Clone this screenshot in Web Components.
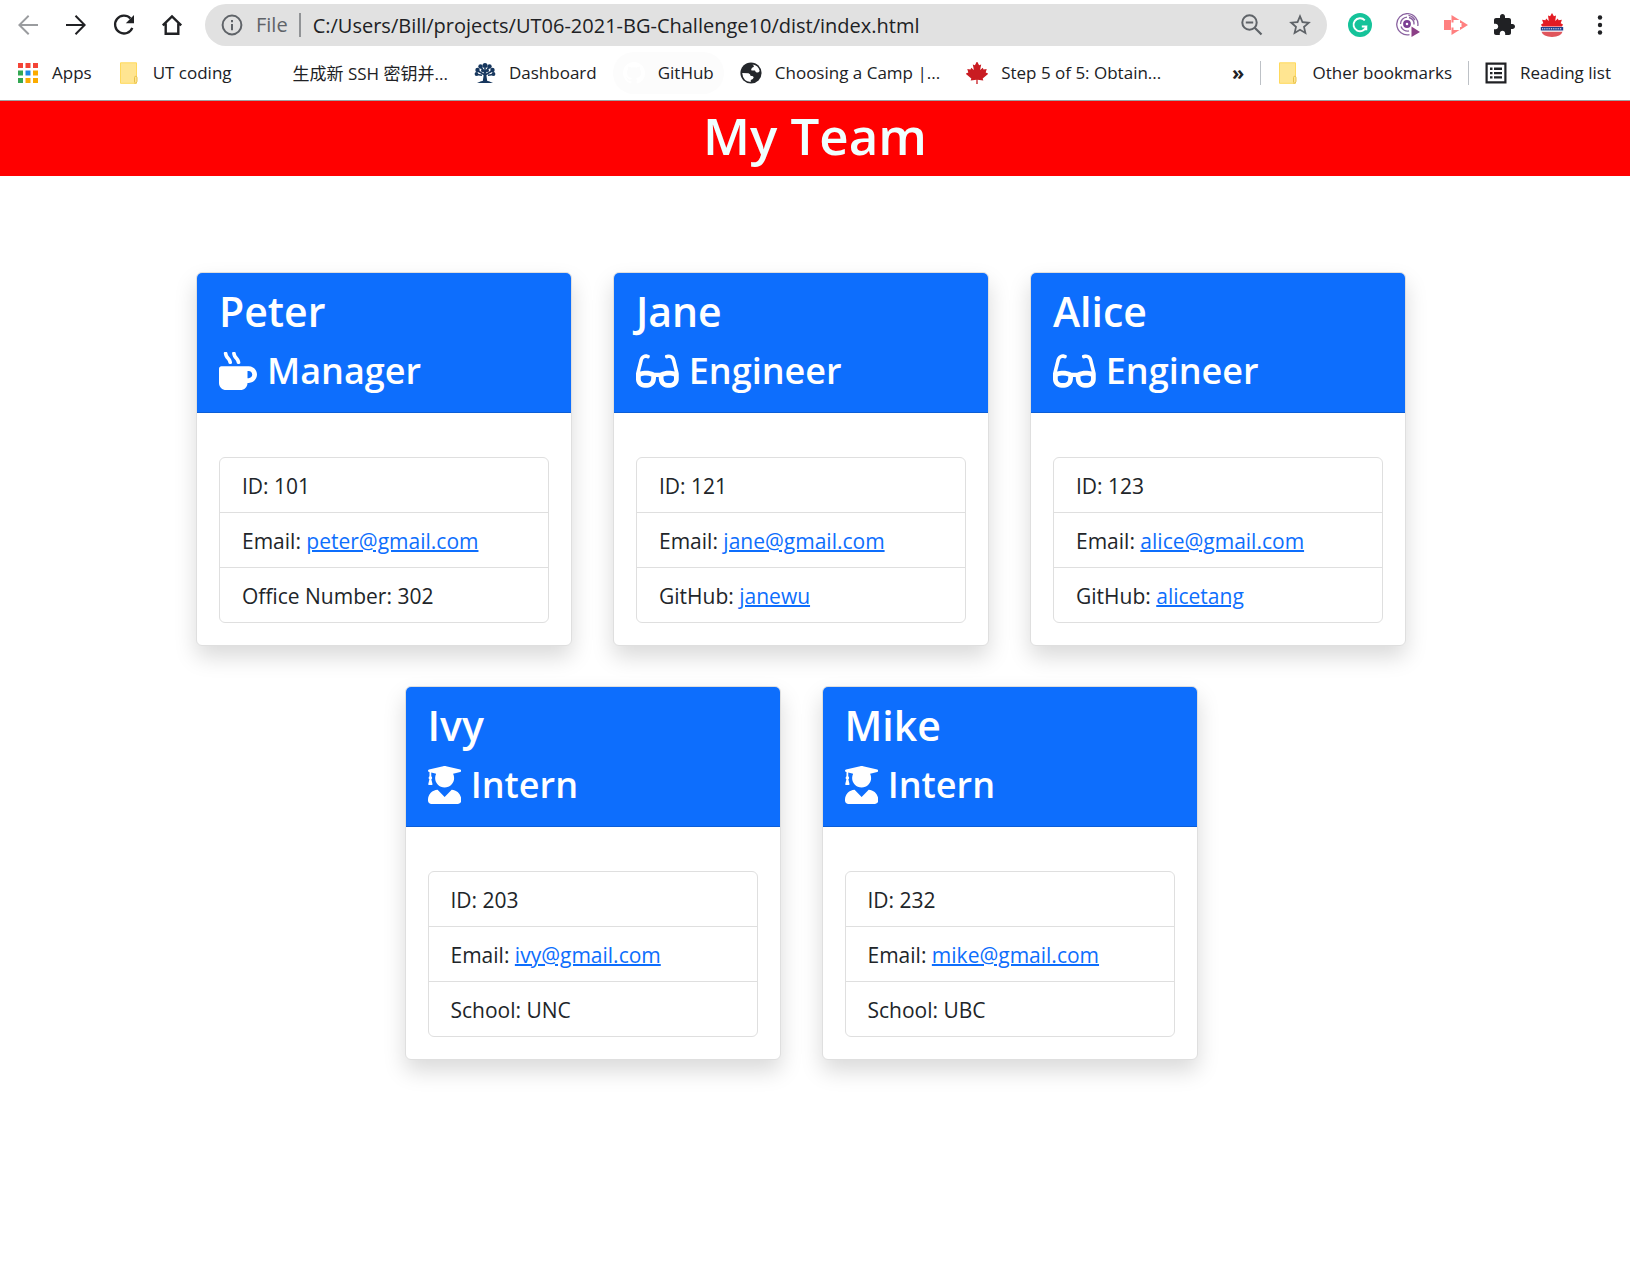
<!DOCTYPE html>
<html lang="en">
<head>
<meta charset="utf-8">
<title>My Team</title>
<style>
  body { margin: 0; background: #fff; color: #212529; font-family: "Open Sans", "Noto Sans CJK SC", sans-serif; }
</style>
</head>
<body>
<browser-toolbar></browser-toolbar>
<bookmarks-bar></bookmarks-bar>
<team-banner>My Team</team-banner>
<team-grid>
  <team-card role-name="Manager" icon="mug"><span slot="name">Peter</span>
    <team-row>ID: 101</team-row><team-row>Email: <a href="mailto:peter@gmail.com">peter@gmail.com</a></team-row><team-row>Office Number: 302</team-row></team-card>
  <team-card role-name="Engineer" icon="glasses"><span slot="name">Jane</span>
    <team-row>ID: 121</team-row><team-row>Email: <a href="mailto:jane@gmail.com">jane@gmail.com</a></team-row><team-row>GitHub: <a href="#janewu">janewu</a></team-row></team-card>
  <team-card role-name="Engineer" icon="glasses"><span slot="name">Alice</span>
    <team-row>ID: 123</team-row><team-row>Email: <a href="mailto:alice@gmail.com">alice@gmail.com</a></team-row><team-row>GitHub: <a href="#alicetang">alicetang</a></team-row></team-card>
  <team-card role-name="Intern" icon="graduate"><span slot="name">Ivy</span>
    <team-row>ID: 203</team-row><team-row>Email: <a href="mailto:ivy@gmail.com">ivy@gmail.com</a></team-row><team-row>School: UNC</team-row></team-card>
  <team-card role-name="Intern" icon="graduate"><span slot="name">Mike</span>
    <team-row>ID: 232</team-row><team-row>Email: <a href="mailto:mike@gmail.com">mike@gmail.com</a></team-row><team-row>School: UBC</team-row></team-card>
</team-grid>
<script>
const ICONS = {
  back: '<svg viewBox="0 0 24 24"><path fill="#9a9c9f" d="M22 11H5.800l7.500-7.500L12 2 2 12l10 10 1.400-1.400L5.800 13H22z"/></svg>',
  forward: '<svg viewBox="0 0 24 24"><path fill="#202124" d="M2 10.900h16.200l-7.400-7.500L12.200 2 22 12l-9.800 10-1.400-1.400 7.400-7.500H2z"/></svg>',
  reload: '<svg viewBox="0 0 24 24"><path d="M20.300 14.800a8.900 8.900 0 1 1-1.800-9.300" fill="none" stroke="#202124" stroke-width="2.300"/><path fill="#202124" d="M22 2v8.200h-8.200z"/></svg>',
  home: '<svg viewBox="0 0 24 24"><path d="M2.800 12.300 12 3.400l9.200 8.900M5.700 10.500v10.200h12.600V10.500" fill="none" stroke="#202124" stroke-width="2.400"/></svg>',
  info: '<svg viewBox="0 0 24 24"><circle cx="12" cy="12" r="9.400" fill="none" stroke="#5f6368" stroke-width="2"/><path fill="#5f6368" d="M11 7h2v2.200h-2zm0 4h2v6.200h-2z"/></svg>',
  zoom: '<svg viewBox="0 0 24 24"><g fill="none" stroke="#5f6368" stroke-width="2"><circle cx="9.500" cy="9.500" r="7.200"/><path d="M5.800 9.500h7.400M14.700 14.700l6.800 6.800" stroke-width="2.200"/></g></svg>',
  star: '<svg viewBox="1 1 22 22"><path fill="#5f6368" d="M22 9.240l-7.190-.62L12 2 9.190 8.630 2 9.240l5.460 4.730L5.820 21 12 17.270 18.180 21l-1.630-7.030L22 9.240zM12 15.400l-3.760 2.270 1-4.280-3.320-2.880 4.380-.38L12 6.100l1.710 4.040 4.380.38-3.320 2.880 1 4.280L12 15.400z"/></svg>',
  grammar: '<svg viewBox="0 0 24 24"><circle cx="12" cy="12" r="12" fill="#15c39a"/><path d="M16.800 7.300a6.500 6.500 0 1 0 1.500 6.200h-4.500m4.500 0v3.700" fill="none" stroke="#fff" stroke-width="1.900"/></svg>',
  screencast: '<svg viewBox="0 0 24 24"><g fill="none" stroke="#8a62a0" stroke-width="1.300"><path d="M13.500 21.600A10.600 10.600 0 1 1 21.800 13"/><path d="M4.500 11a6.800 6.800 0 0 1 6.500-6.800M13 4.500a6.800 6.800 0 0 1 5 7M5 13.500a6.800 6.800 0 0 0 8 4.400M12.500 2.300a8.800 8.800 0 0 1 6.500 5"/></g><circle cx="11" cy="11" r="2.600" fill="none" stroke="#7b3f94" stroke-width="2.600"/><path fill="#8b3f86" d="M15.500 13.500 24 19l-8.500 5z"/></svg>',
  player: '<svg viewBox="0 0 24 24"><path fill="#ff8080" d="M0 7h7v10H0zM7.500 2l8 5H9.500v2.500h-2zM7.500 22l8-5H9.500v-2.500h-2zM16 7l8 5-8 5v-3h1.500v-4H16z"/></svg>',
  puzzle: '<svg viewBox="0 0 24 24"><path fill="#202124" d="M20.500 11H19V7c0-1.100-.9-2-2-2h-4V3.500C13 2.120 11.880 1 10.500 1S8 2.120 8 3.500V5H4c-1.100 0-1.990.9-1.990 2v3.800H3.500c1.490 0 2.700 1.210 2.700 2.700s-1.210 2.700-2.700 2.700H2V20c0 1.100.9 2 2 2h3.800v-1.500c0-1.490 1.210-2.700 2.700-2.700 1.490 0 2.700 1.210 2.700 2.700V22H17c1.100 0 2-.9 2-2v-4h1.500c1.380 0 2.500-1.120 2.500-2.500S21.880 11 20.500 11z"/></svg>',
  canada: '<svg viewBox="0 0 24 24"><path fill="#e31b23" d="M12 0l-1.900 3.300L8 2.400l.8 5.600-2.700-2.400-.6 1.600-3.400-.5 1.200 3.600L1 11.500 2 13.500h20l1-2-2.300-1.200 1.200-3.600-3.400.5-.6-1.600L15.200 8l.8-5.600-2.100.9z"/><path fill="#1f3f8c" d="M.8 14h22.400v3.500H.8z"/><path stroke="#fff" stroke-width="1" stroke-dasharray="1 .8" d="M2 15.800h20"/><path fill="#e0555c" d="M1.500 18.700h21q-1.500 4.900-10.500 5.300-9-.4-10.500-5.300z"/></svg>',
  menu: '<svg viewBox="0 0 24 24"><g fill="#202124"><circle cx="12" cy="4.500" r="2.200"/><circle cx="12" cy="12" r="2.200"/><circle cx="12" cy="19.500" r="2.200"/></g></svg>',
  apps: '<svg viewBox="0 0 22 22"><path fill="#f44336" d="M1 1h5v5H1zM8.500 1h5v5h-5zM16 1h5v5h-5z"/><path fill="#34a853" d="M1 8.500h5v5H1zM1 16h5v5H1z"/><path fill="#1e88e5" d="M8.500 8.500h5v5h-5z"/><path fill="#fbab00" d="M16 8.500h5v5h-5zM16 16h5v5h-5zM8.500 16h5v5h-5z"/></svg>',
  folder: '<svg viewBox="0 0 22 22"><path fill="#ffe591" stroke="#ffd95c" d="M2.500.8h16v20.500h-16z"/><path fill="#ffe591" stroke="#e7c14a" d="M16.500 20.500v-5q0-1.200 1.200-1.200t1.300 1.200v3.800q0 2-2.500 2"/></svg>',
  blank: '<svg viewBox="0 0 22 22"></svg>',
  tree: '<svg viewBox="0 0 22 22"><path fill="none" stroke="#17375e" stroke-width="1.600" d="M11 19V6M11 13 4 9m7 4 7-4m-7 2L7 5m4 6 4-6M3 12.500l5 .7m11-.7-5 .7"/><g fill="#17375e"><circle cx="11" cy="3.500" r="2.500"/><circle cx="6.500" cy="4.500" r="2.200"/><circle cx="15.500" cy="4.500" r="2.200"/><circle cx="3.500" cy="8" r="2.200"/><circle cx="18.500" cy="8" r="2.200"/><circle cx="2.500" cy="12" r="1.900"/><circle cx="19.500" cy="12" r="1.900"/><circle cx="8.500" cy="8.500" r="1.500"/><circle cx="13.500" cy="8.500" r="1.500"/><path d="M9.800 12h2.400l1 7h-4.400z"/><path d="M3 21q4-2.500 8-2.500t8 2.500z"/></g></svg>',
  github: '<svg viewBox="0 0 16 16"><path fill="#fff" d="M8 0C3.580 0 0 3.580 0 8c0 3.540 2.290 6.530 5.470 7.590.4.070.55-.17.55-.38 0-.19-.01-.82-.01-1.490-2.010.37-2.530-.49-2.690-.94-.09-.23-.48-.94-.82-1.130-.28-.15-.68-.52-.01-.53.63-.01 1.080.58 1.230.82.72 1.210 1.870.87 2.330.66.07-.52.28-.87.51-1.070-1.780-.2-3.640-.89-3.640-3.950 0-.87.31-1.590.82-2.150-.08-.2-.36-1.020.08-2.120 0 0 .67-.21 2.200.82.640-.18 1.320-.27 2-.27s1.360.09 2 .27c1.530-1.040 2.200-.82 2.200-.82.44 1.100.16 1.920.08 2.120.51.560.82 1.270.82 2.150 0 3.070-1.870 3.750-3.650 3.950.29.250.54.730.54 1.480 0 1.070-.01 1.930-.01 2.200 0 .21.150.46.550.38A8.010 8.010 0 0 0 16 8c0-4.420-3.580-8-8-8z"/></svg>',
  globe: '<svg viewBox="0 0 22 22"><circle cx="11" cy="11" r="10.600" fill="#24272b"/><path fill="#fff" d="M12.500 2.500q6 .8 7.200 6.500-1.500 2.300-3.500 1.300-1-.8-1.200-1.800h-3.500q-1-1.400.6-2.800 2-.5 1.900-1.800zM2.200 11l6.300.2q2 .5 2 2.600l2.500.5q1.500 1-.2 2.600l-2 1.200-.1 2Q3 19.500 2.200 11z"/></svg>',
  leaf: '<svg viewBox="1 1 22 22"><path fill="#c91c22" d="M12 .2 9.900 4.300 7.800 3.400 8.900 9 6.200 6.800 5.500 8.500 2.300 8l1 3.400L.5 12.600l5.800 5-.6 1.900 5.700-.7-.1 4.700h1.400l-.1-4.700 5.700.7-.6-1.900 5.800-5-2.800-1.200 1-3.400-3.200.5-.7-1.700L15.100 9l1.100-5.600-2.100.9z"/></svg>',
  list: '<svg viewBox="0 0 22 22"><path fill="none" stroke="#202124" stroke-width="2.200" d="M1.600 1.600h18.800v18.800H1.600z"/><path fill="#202124" d="M5 5.500h2.500V8H5zm4 0h8V8H9zM5 10h2.500v2.300H5zm4 0h8v2.300H9zm-4 4.300h2.500v2.300H5zm4 0h8v2.300H9z"/></svg>',
  mug: '<svg viewBox="0 0 512 512"><path fill="#fff" d="M127.100 146.500c1.300 7.700 8 13.500 16 13.500h16.500c9.800 0 17.600-8.500 16.300-18-3.800-28.200-16.400-54.200-36.600-74.700-14.400-14.700-23.600-33.300-26.400-53.500C111.800 5.900 105 0 96.800 0H80.400C70.600 0 63 8.500 64.100 18c3.900 31.900 18 61.300 40.600 84.400 12 12.200 19.700 27.500 22.400 44.100zm112 0c1.300 7.700 8 13.500 16 13.500h16.500c9.800 0 17.600-8.500 16.300-18-3.800-28.200-16.400-54.200-36.600-74.700-14.400-14.700-23.600-33.300-26.400-53.500C223.800 5.900 217 0 208.800 0h-16.400c-9.800 0-17.500 8.500-16.300 18 3.900 31.900 18 61.300 40.600 84.400 12 12.200 19.700 27.500 22.400 44.100zM400 192H32c-17.700 0-32 14.300-32 32v192c0 53 43 96 96 96h192c53 0 96-43 96-96h16c61.800 0 112-50.200 112-112s-50.200-112-112-112zm0 160h-16v-96h16c26.500 0 48 21.500 48 48s-21.500 48-48 48z"/></svg>',
  glasses: '<svg viewBox="0 0 576 512"><path fill="#fff" d="M574.100 280.370L528.750 98.660c-5.910-23.700-21.590-44.050-43-55.810-21.440-11.730-46.970-14.110-70.190-6.330l-15.250 5.080c-8.390 2.790-12.920 11.860-10.120 20.240l5.060 15.180c2.790 8.380 11.850 12.910 20.230 10.120l13.180-4.390c10.870-3.620 23-3.570 33.160 1.730 10.290 5.370 17.570 14.560 20.370 25.820l38.460 153.820c-22.190-6.810-49.790-12.460-81.200-12.460-34.770 0-73.980 7.020-114.850 26.740h-73.180c-40.870-19.740-80.080-26.750-114.860-26.750-31.420 0-59.020 5.650-81.210 12.460l38.460-153.830c2.790-11.250 10.090-20.450 20.380-25.810 10.160-5.300 22.280-5.350 33.150-1.730l13.170 4.390c8.380 2.790 17.440-1.740 20.230-10.120l5.060-15.180c2.800-8.380-1.730-17.450-10.120-20.240l-15.250-5.080c-23.220-7.780-48.750-5.410-70.190 6.330-21.410 11.770-37.090 32.110-43 55.800L1.900 280.370A64.218 64.218 0 0 0 0 295.860v70.250C0 429.010 51.580 480 115.200 480h37.120c60.280 0 110.370-45.940 114.880-105.370l2.930-38.630h35.750l2.930 38.630C313.310 434.060 363.400 480 423.680 480h37.120c63.620 0 115.200-50.990 115.200-113.880v-70.250c0-5.230-.64-10.430-1.900-15.500zm-370.720 89.420c-1.970 25.910-24.400 46.210-51.060 46.210H115.200C86.970 416 64 393.620 64 366.110v-37.540c18.120-6.490 43.420-12.920 72.580-12.920 23.860 0 47.260 4.330 69.930 12.920l-3.130 41.220zM512 366.120c0 27.510-22.970 49.880-51.200 49.880h-37.120c-26.670 0-49.100-20.300-51.060-46.210l-3.130-41.220c22.670-8.590 46.080-12.920 69.950-12.920 29.120 0 54.430 6.440 72.550 12.930v37.540z"/></svg>',
  graduate: '<svg viewBox="0 0 448 512"><path fill="#fff" d="M319.400 320.600L224 416l-95.400-95.400C57.100 323.700 0 382.200 0 454.400v9.600c0 26.500 21.500 48 48 48h352c26.500 0 48-21.500 48-48v-9.600c0-72.200-57.100-130.700-128.600-133.800zM13.600 79.800l6.400 1.500v58.400c-7 4.200-12 11.500-12 20.300 0 8.400 4.600 15.400 11.100 19.700L3.500 242c-1.700 6.900 2.100 14 7.600 14h41.800c5.500 0 9.300-7.100 7.600-14l-15.600-62.300C51.400 175.400 56 168.400 56 160c0-8.800-5-16.100-12-20.300V87.100l66 15.900c-8.600 17.200-14 36.400-14 57 0 70.700 57.300 128 128 128s128-57.300 128-128c0-20.600-5.300-39.800-14-57l96.300-23.200c18.200-4.400 18.200-27.100 0-31.500l-190.400-46c-13-3.100-26.700-3.100-39.700 0L13.600 48.200c-18.100 4.400-18.100 27.100 0 31.600z"/></svg>'
};

class ShadowElement extends HTMLElement {
  connectedCallback() {
    if (!this.shadowRoot) this.attachShadow({ mode: 'open' }).innerHTML = this.render();
  }
}

class UiIcon extends ShadowElement {
  render() {
    return `<style>:host{display:block;flex:none;width:24px;height:24px}svg{display:block;width:auto;height:100%}</style>${ICONS[this.getAttribute('name')]}`;
  }
}

class BrowserToolbar extends ShadowElement {
  render() {
    const button = (icon, label) => `<button type="button" aria-label="${label}"><ui-icon name="${icon}"></ui-icon></button>`;
    return `<style>
      :host{display:flex;align-items:center;height:50px;padding:0 18px 0 16px;background:#fff}
      button{display:block;flex:none;border:0;padding:0;background:none}
      .nav,.ext{display:flex;gap:24px}
      .nav{padding-right:21px}
      .ext{padding-left:21px}
      .address{flex:1;display:flex;align-items:center;height:42px;box-sizing:border-box;padding:0 15px;border-radius:21px;background:#e1e1e1;font-size:20px;color:#202124}
      .scheme{color:#5f6368;margin-left:12px;padding-right:11px;line-height:24px;border-right:2px solid #919396}
      input{flex:1;min-width:0;border:0;padding:0 12px;background:none;font:inherit;color:inherit;outline:0}
      .address button+button{margin-left:24px}
    </style>
    <div class="nav">${button('back', 'Back')}${button('forward', 'Forward')}${button('reload', 'Reload')}${button('home', 'Home')}</div>
    <div class="address"><ui-icon name="info"></ui-icon><label class="scheme" for="url">File</label>
      <input id="url" type="text" value="C:/Users/Bill/projects/UT06-2021-BG-Challenge10/dist/index.html">
      ${button('zoom', 'Zoom')}${button('star', 'Bookmark this page')}</div>
    <div class="ext">${button('grammar', 'Grammar')}${button('screencast', 'Screencast')}${button('player', 'Player')}${button('puzzle', 'Extensions')}${button('canada', 'Canada')}${button('menu', 'Menu')}</div>`;
  }
}

class BookmarkItem extends ShadowElement {
  render() {
    return `<style>
      :host{display:block;flex:none}
      a{display:flex;align-items:center;gap:13px;height:42px;padding:0 10px;border-radius:21px;color:inherit;text-decoration:none;white-space:nowrap}
      :host([hovered]) a{background:#fcfcfc}
      ui-icon{width:22px;height:22px}
    </style><a href="#"><ui-icon name="${this.getAttribute('icon')}"></ui-icon><span><slot></slot></span></a>`;
  }
}

class BookmarksBar extends ShadowElement {
  render() {
    return `<style>
      :host{display:flex;align-items:center;gap:6px;height:51px;box-sizing:border-box;padding:0 9px 5px 7px;border-bottom:1px solid #a0a0a0;font-size:17px;color:#202124}
      button{margin-left:auto;border:0;padding:0 10px;background:none;font:inherit;font-size:20px;font-weight:700;color:inherit}
      .sep{flex:none;width:1px;height:24px;background:#bdc1c6}
    </style>
    <bookmark-item icon="apps">Apps</bookmark-item>
    <bookmark-item icon="folder">UT coding</bookmark-item>
    <bookmark-item icon="blank">生成新 SSH 密钥并...</bookmark-item>
    <bookmark-item icon="tree">Dashboard</bookmark-item>
    <bookmark-item icon="github" hovered>GitHub</bookmark-item>
    <bookmark-item icon="globe">Choosing a Camp |...</bookmark-item>
    <bookmark-item icon="leaf">Step 5 of 5: Obtain...</bookmark-item>
    <button type="button">»</button><div class="sep"></div>
    <bookmark-item icon="folder">Other bookmarks</bookmark-item><div class="sep"></div>
    <bookmark-item icon="list">Reading list</bookmark-item>`;
  }
}

class TeamBanner extends ShadowElement {
  render() {
    return `<style>
      :host{display:block;padding-bottom:6px;background:#f00;color:azure;text-align:center}
      h1{margin:0;font-size:51px;line-height:69px;font-weight:600}
    </style><h1><slot></slot></h1>`;
  }
}

class TeamGrid extends ShadowElement {
  render() {
    return `<style>
      :host{display:flex;flex-wrap:wrap;justify-content:center;gap:40px 41px;padding:96px 28px 41px 0}
    </style><slot></slot>`;
  }
}

class TeamCard extends ShadowElement {
  render() {
    return `<style>
      :host{display:block;width:376px;box-sizing:border-box;border:1px solid #dfdfdf;border-radius:6px;background:#fff;box-shadow:0 11px 22px rgba(0,0,0,.15)}
      header{padding:11px 22px 13px;border-bottom:1px solid #0b5ed7;border-radius:5px 5px 0 0;background:#0d6efd;color:#fff}
      h2,h3{margin:0;font-weight:600}
      h2{font-size:41px;line-height:54px}
      h3{display:flex;align-items:center;gap:10px;margin-top:5px;font-size:36px;line-height:56px}
      ui-icon{width:auto;height:38px}
      .body{padding:44px 22px 22px}
      .list{border:1px solid #dfdfdf;border-radius:6px}
    </style>
    <header><h2><slot name="name"></slot></h2><h3><ui-icon name="${this.getAttribute('icon')}"></ui-icon><span>${this.getAttribute('role-name')}</span></h3></header>
    <div class="body"><div class="list"><slot></slot></div></div>`;
  }
}

class TeamRow extends ShadowElement {
  render() {
    return `<style>
      :host{display:block;padding:12px 22px 10px;font-size:21px;line-height:32px}
      :host(:not(:last-child)){border-bottom:1px solid #dfdfdf}
      ::slotted(a){color:#0d6efd;text-decoration:underline;text-decoration-thickness:2px}
    </style><slot></slot>`;
  }
}

customElements.define('ui-icon', UiIcon);
customElements.define('browser-toolbar', BrowserToolbar);
customElements.define('bookmark-item', BookmarkItem);
customElements.define('bookmarks-bar', BookmarksBar);
customElements.define('team-banner', TeamBanner);
customElements.define('team-grid', TeamGrid);
customElements.define('team-card', TeamCard);
customElements.define('team-row', TeamRow);
</script>
</body>
</html>
